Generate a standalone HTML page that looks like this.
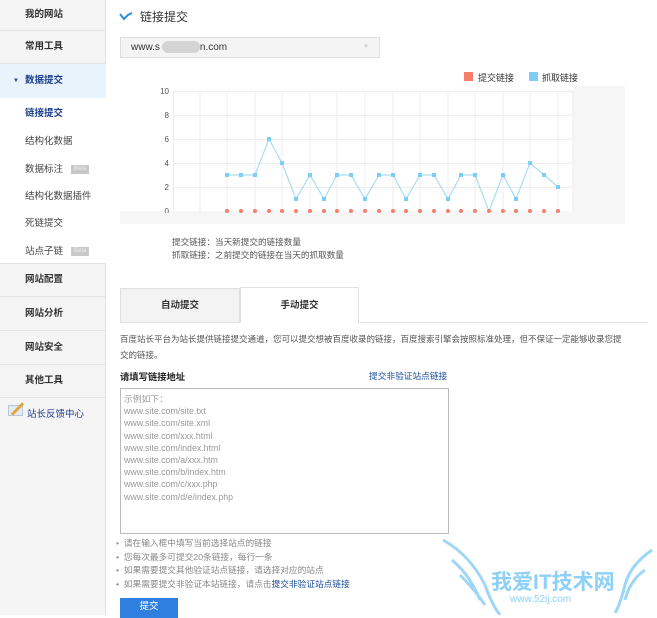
<!DOCTYPE html>
<html><head><meta charset="utf-8"><style>
*{margin:0;padding:0;box-sizing:border-box}
body{width:657px;height:615px;overflow:hidden;background:#fff;font-family:"Liberation Sans","Noto Sans CJK SC",sans-serif;font-size:9px;color:#333;position:relative}
.a{position:absolute}
.side{left:0;top:0;width:106px;height:615px;background:#f5f5f5;border-right:1px solid #e2e2e2}
.it{position:absolute;left:0;width:106px;border-bottom:1px solid #e2e2e2;font-weight:bold;font-size:9.5px;color:#333;padding-left:25px}
.sub{position:absolute;left:25px;font-size:9.5px;color:#444}
.beta{display:inline-block;background:#c8c8c8;color:#eee;font-size:6px;padding:0 3px;margin-left:8px;vertical-align:middle;line-height:9px}
</style></head><body>
<div class="a side"></div>
<div class="it" style="top:0;height:31px;line-height:30px">我的网站</div>
<div class="it" style="top:31px;height:33px;line-height:32px">常用工具</div>
<div class="it" style="top:64px;height:34px;line-height:34px;background:#e9f3fc;color:#1b3f8c;border-bottom:none"><span style="position:absolute;left:13px;font-size:6px">▼</span>数据提交</div>
<div class="a" style="left:0;top:98px;width:106px;height:166px;background:#fff;border-bottom:1px solid #e2e2e2"></div>
<div class="sub" style="top:105px;color:#1b3f8c;font-weight:bold">链接提交</div>
<div class="sub" style="top:133px">结构化数据</div>
<div class="sub" style="top:161px">数据标注<span class="beta">Beta</span></div>
<div class="sub" style="top:188px">结构化数据插件</div>
<div class="sub" style="top:215px">死链提交</div>
<div class="sub" style="top:243px">站点子链<span class="beta">Beta</span></div>
<div class="it" style="top:264px;height:33px;line-height:32px">网站配置</div>
<div class="it" style="top:297px;height:34px;line-height:33px">网站分析</div>
<div class="it" style="top:331px;height:34px;line-height:33px">网站安全</div>
<div class="it" style="top:365px;height:33px;line-height:32px">其他工具</div>
<div class="a" style="left:8px;top:405px;width:15px;height:11px;background:#e4ebf3;border:1px solid #b8c7d8"></div>
<div class="a" style="top:401px;width:3px;height:16px;background:#e2a640;transform:rotate(45deg);left:16px"></div>
<div class="a" style="left:27px;top:406px;font-size:9.5px;color:#1b3f8c">站长反馈中心</div>

<svg class="a" style="left:119px;top:12px" width="14" height="9"><polyline points="1,2 5,7 9,3 13,1" fill="none" stroke="#2a8ee0" stroke-width="2"/></svg>
<div class="a" style="left:140px;top:8px;font-size:12px;color:#333">链接提交</div>
<div class="a" style="left:120px;top:37px;width:260px;height:21px;background:#f4f4f4;border:1px solid #ddd;font-size:10px;line-height:19px;padding-left:10px;color:#333">www.s<span style="display:inline-block;width:38px;height:12px;background:#d4d4d4;border-radius:6px;vertical-align:middle;margin-left:2px"></span>n.com<span style="position:absolute;right:10px;color:#ccc;font-size:6px">▼</span></div>

<div class="a" style="left:464px;top:72px;width:9px;height:9px;background:#f57d6a"></div>
<div class="a" style="left:478px;top:71px;font-size:9px">提交链接</div>
<div class="a" style="left:529px;top:72px;width:9px;height:9px;background:#7dcdf5"></div>
<div class="a" style="left:542px;top:71px;font-size:9px">抓取链接</div>

<svg class="a" style="left:0;top:0" width="657" height="224">
<rect x="573" y="86" width="52" height="138" fill="#f6f6f6"/>
<rect x="120" y="211" width="505" height="13" fill="#f6f6f6"/>
<rect x="173" y="91" width="400" height="120" fill="#fff"/>
<g stroke="#ececec" stroke-width="1">
<line x1="173" y1="91.5" x2="573" y2="91.5"/><line x1="173" y1="115.5" x2="573" y2="115.5"/><line x1="173" y1="139.5" x2="573" y2="139.5"/><line x1="173" y1="163.5" x2="573" y2="163.5"/><line x1="173" y1="187.5" x2="573" y2="187.5"/>
<line x1="173.5" y1="91" x2="173.5" y2="211"/><line x1="200" y1="91" x2="200" y2="211"/><line x1="227" y1="91" x2="227" y2="211"/><line x1="255" y1="91" x2="255" y2="211"/><line x1="282" y1="91" x2="282" y2="211"/><line x1="310" y1="91" x2="310" y2="211"/><line x1="337" y1="91" x2="337" y2="211"/><line x1="365" y1="91" x2="365" y2="211"/><line x1="393" y1="91" x2="393" y2="211"/><line x1="420" y1="91" x2="420" y2="211"/><line x1="448" y1="91" x2="448" y2="211"/><line x1="475" y1="91" x2="475" y2="211"/><line x1="503" y1="91" x2="503" y2="211"/><line x1="530" y1="91" x2="530" y2="211"/><line x1="558" y1="91" x2="558" y2="211"/><line x1="573" y1="91" x2="573" y2="211"/>
</g>
<g font-size="8" fill="#555" text-anchor="end" font-family="Liberation Sans"><text x="169" y="94">10</text><text x="169" y="118">8</text><text x="169" y="142">6</text><text x="169" y="166">4</text><text x="169" y="190">2</text><text x="169" y="214">0</text></g>
<polyline fill="none" stroke="#a8dcf5" stroke-width="1.2" points="227,175 241,175 255,175 269,139 282,163 296,199 310,175 324,199 337,175 351,175 365,199 379,175 393,175 406,199 420,175 434,175 448,199 461,175 475,175 489,211 503,175 516,199 530,163 544,175 558,187"/>
<g fill="#7dcdf5">
<rect x="225" y="173" width="4" height="4"/><rect x="239" y="173" width="4" height="4"/><rect x="253" y="173" width="4" height="4"/><rect x="267" y="137" width="4" height="4"/><rect x="280" y="161" width="4" height="4"/><rect x="294" y="197" width="4" height="4"/><rect x="308" y="173" width="4" height="4"/><rect x="322" y="197" width="4" height="4"/><rect x="335" y="173" width="4" height="4"/><rect x="349" y="173" width="4" height="4"/><rect x="363" y="197" width="4" height="4"/><rect x="377" y="173" width="4" height="4"/><rect x="391" y="173" width="4" height="4"/><rect x="404" y="197" width="4" height="4"/><rect x="418" y="173" width="4" height="4"/><rect x="432" y="173" width="4" height="4"/><rect x="446" y="197" width="4" height="4"/><rect x="459" y="173" width="4" height="4"/><rect x="473" y="173" width="4" height="4"/><rect x="501" y="173" width="4" height="4"/><rect x="514" y="197" width="4" height="4"/><rect x="528" y="161" width="4" height="4"/><rect x="542" y="173" width="4" height="4"/><rect x="556" y="185" width="4" height="4"/>
</g>
<g fill="#f57d6a"><circle cx="227" cy="211" r="2"/><circle cx="241" cy="211" r="2"/><circle cx="255" cy="211" r="2"/><circle cx="269" cy="211" r="2"/><circle cx="282" cy="211" r="2"/><circle cx="296" cy="211" r="2"/><circle cx="310" cy="211" r="2"/><circle cx="324" cy="211" r="2"/><circle cx="337" cy="211" r="2"/><circle cx="351" cy="211" r="2"/><circle cx="365" cy="211" r="2"/><circle cx="379" cy="211" r="2"/><circle cx="393" cy="211" r="2"/><circle cx="406" cy="211" r="2"/><circle cx="420" cy="211" r="2"/><circle cx="434" cy="211" r="2"/><circle cx="448" cy="211" r="2"/><circle cx="461" cy="211" r="2"/><circle cx="475" cy="211" r="2"/><circle cx="489" cy="211" r="2"/><circle cx="503" cy="211" r="2"/><circle cx="516" cy="211" r="2"/><circle cx="530" cy="211" r="2"/><circle cx="544" cy="211" r="2"/><circle cx="558" cy="211" r="2"/></g>
<rect x="120" y="213" width="505" height="11" fill="#f6f6f6"/>
</svg>
<div class="a" style="left:172px;top:236px;font-size:8.6px;color:#555;line-height:13px">提交链接：当天新提交的链接数量<br>抓取链接：之前提交的链接在当天的抓取数量</div>

<div class="a" style="left:120px;top:288px;width:120px;height:35px;background:#f3f3f3;border:1px solid #e0e0e0;text-align:center;line-height:34px;font-weight:bold;font-size:9.5px">自动提交</div>
<div class="a" style="left:240px;top:287px;width:119px;height:36px;background:#fff;border:1px solid #e0e0e0;border-bottom:none;text-align:center;line-height:36px;font-weight:bold;font-size:9.5px">手动提交</div>
<div class="a" style="left:359px;top:322px;width:289px;height:1px;background:#e0e0e0"></div>
<div class="a" style="left:120px;top:331px;width:505px;font-size:8.5px;line-height:16px;color:#555">百度站长平台为站长提供链接提交通道，您可以提交想被百度收录的链接，百度搜索引擎会按照标准处理，但不保证一定能够收录您提交的链接。</div>
<div class="a" style="left:120px;top:369px;font-size:9.3px;font-weight:bold;color:#222">请填写链接地址</div>
<div class="a" style="left:369px;top:369px;font-size:8.7px;color:#1b4c9c">提交非验证站点链接</div>
<div class="a" style="left:120px;top:388px;width:329px;height:146px;border:1px solid #bbb;padding:4px 3px;font-size:8.8px;line-height:12.2px;color:#999">示例如下：<br>www.site.com/site.txt<br>www.site.com/site.xml<br>www.site.com/xxx.html<br>www.site.com/index.html<br>www.site.com/a/xxx.htm<br>www.site.com/b/index.htm<br>www.site.com/c/xxx.php<br>www.site.com/d/e/index.php</div>
<div class="a" style="left:116px;top:537px;font-size:8.7px;line-height:13.6px;color:#888">• &nbsp;请在输入框中填写当前选择站点的链接<br>• &nbsp;您每次最多可提交20条链接，每行一条<br>• &nbsp;如果需要提交其他验证站点链接，请选择对应的站点<br>• &nbsp;如果需要提交非验证本站链接，请点击<span style="color:#1b4c9c">提交非验证站点链接</span></div>
<div class="a" style="left:120px;top:598px;width:58px;height:20px;background:#2f7fe0;color:#fff;text-align:center;line-height:18px;font-size:9.5px">提交</div>
<div class="a" style="left:491px;top:566px;font-size:21px;font-weight:bold;color:#8fd0f6">我爱IT技术网</div>
<div class="a" style="left:510px;top:594px;font-size:10px;color:#8fd0f6">www.52ij.com</div>
<svg class="a" style="left:440px;top:535px" width="215" height="80"><path d="M3,5 Q30,20 45,50 Q52,70 60,80 M12,25 Q30,40 40,65 M20,40 Q35,55 45,70" fill="none" stroke="#9fd6f7" stroke-width="3"/><path d="M212,15 Q190,30 185,50 Q180,70 175,78 M205,35 Q190,45 185,65" fill="none" stroke="#9fd6f7" stroke-width="3"/></svg>
</body></html>
